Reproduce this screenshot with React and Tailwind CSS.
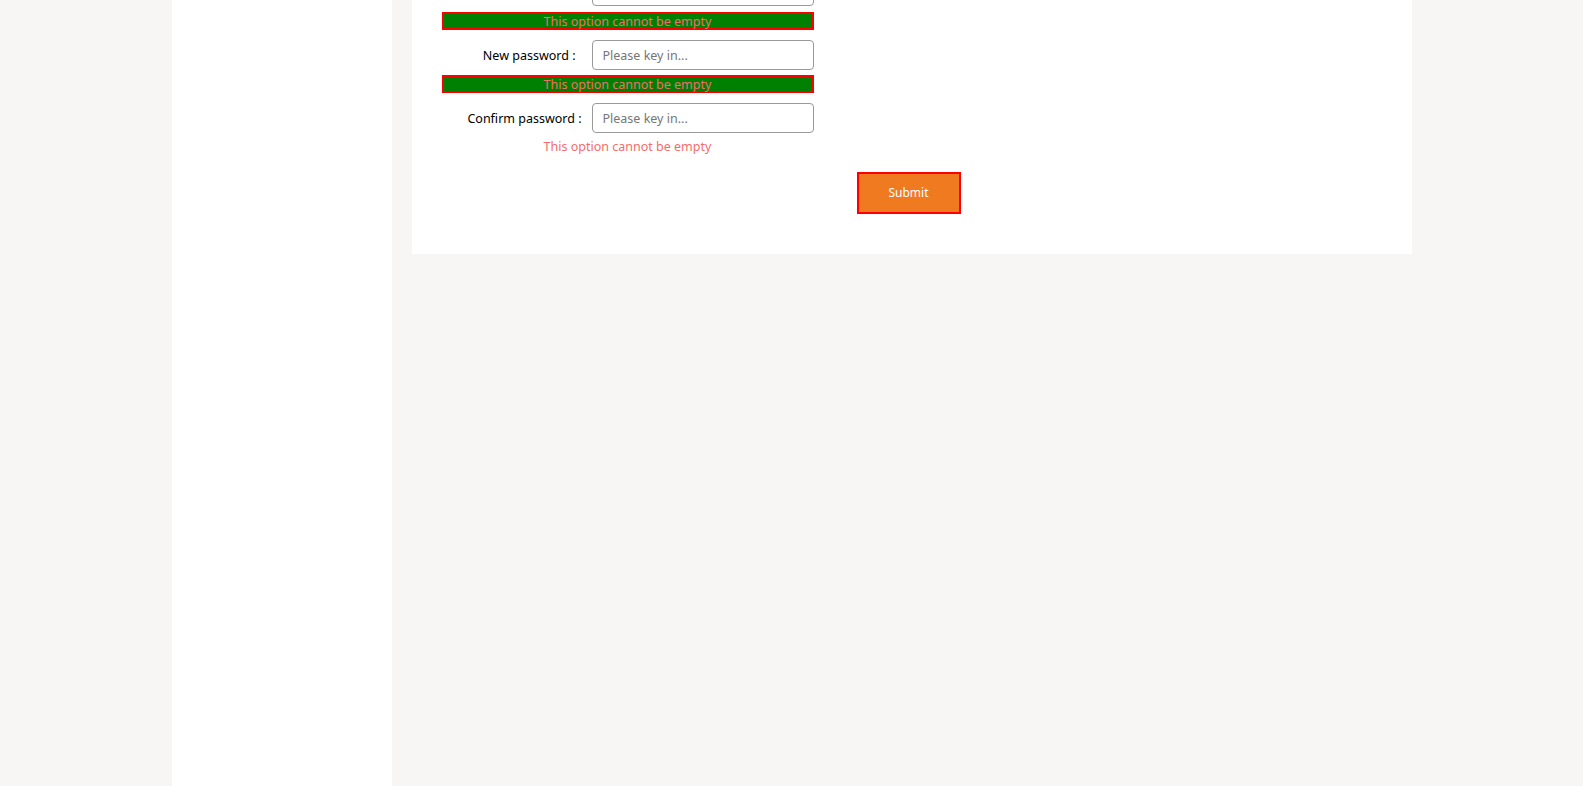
import React from 'react';

const font = { fontFamily: '"Noto Sans", "Open Sans", sans-serif' };

const FieldRow = ({ label, labelPad }) => (
  <div className="flex items-center h-[30px]">
    <label className={`w-[150px] shrink-0 text-right text-[12.5px] leading-none pt-[2px] text-black ${labelPad}`}>
      {label}
    </label>
    <input
      type="password"
      placeholder="Please key in..."
      className="w-[222px] h-[30px] rounded-[4px] border border-[#9a9a9a] bg-white px-[10px] text-[12.5px] outline-none placeholder:text-[#767676]"
    />
  </div>
);

const ErrorBar = ({ highlighted }) => (
  <div
    className={
      highlighted
        ? 'w-[372px] h-[18px] border-2 border-[#ff0000] bg-[#008000] text-[12.5px] leading-[16px] text-center text-[#f56c6c]'
        : 'w-[372px] h-[18px] text-[12.5px] leading-[19px] text-center text-[#f56c6c]'
    }
  >
    This option cannot be empty
  </div>
);

export default function App() {
  return (
    <div className="min-h-screen bg-[#f7f6f4]" style={font}>
      <div className="w-[1240px] mx-auto flex min-h-screen">
        {/* sidebar */}
        <aside className="w-[220px] shrink-0 bg-white" />

        {/* main */}
        <main className="flex-1 pl-[20px]">
          <div className="w-[1000px] bg-white px-[30px] pb-[40px] -mt-[24px]">
            {/* first row sits above the fold */}
            <FieldRow label="" labelPad="pr-[12px]" />
            <div className="mt-[6px] mb-[10px]">
              <ErrorBar highlighted />
            </div>

            <FieldRow label="New password :" labelPad="pr-[16px]" />
            <div className="mt-[5px] mb-[10px]">
              <ErrorBar highlighted />
            </div>

            <FieldRow label="Confirm password :" labelPad="pr-[10px]" />
            <div className="mt-[4px]">
              <ErrorBar />
            </div>

            <div className="flex justify-center mt-[17px] pr-[6px]">
              <button className="w-[104px] h-[42px] border-2 border-[#ff0000] bg-[#f07a1f] text-white text-[12px]">
                Submit
              </button>
            </div>
          </div>
        </main>
      </div>
    </div>
  );
}
